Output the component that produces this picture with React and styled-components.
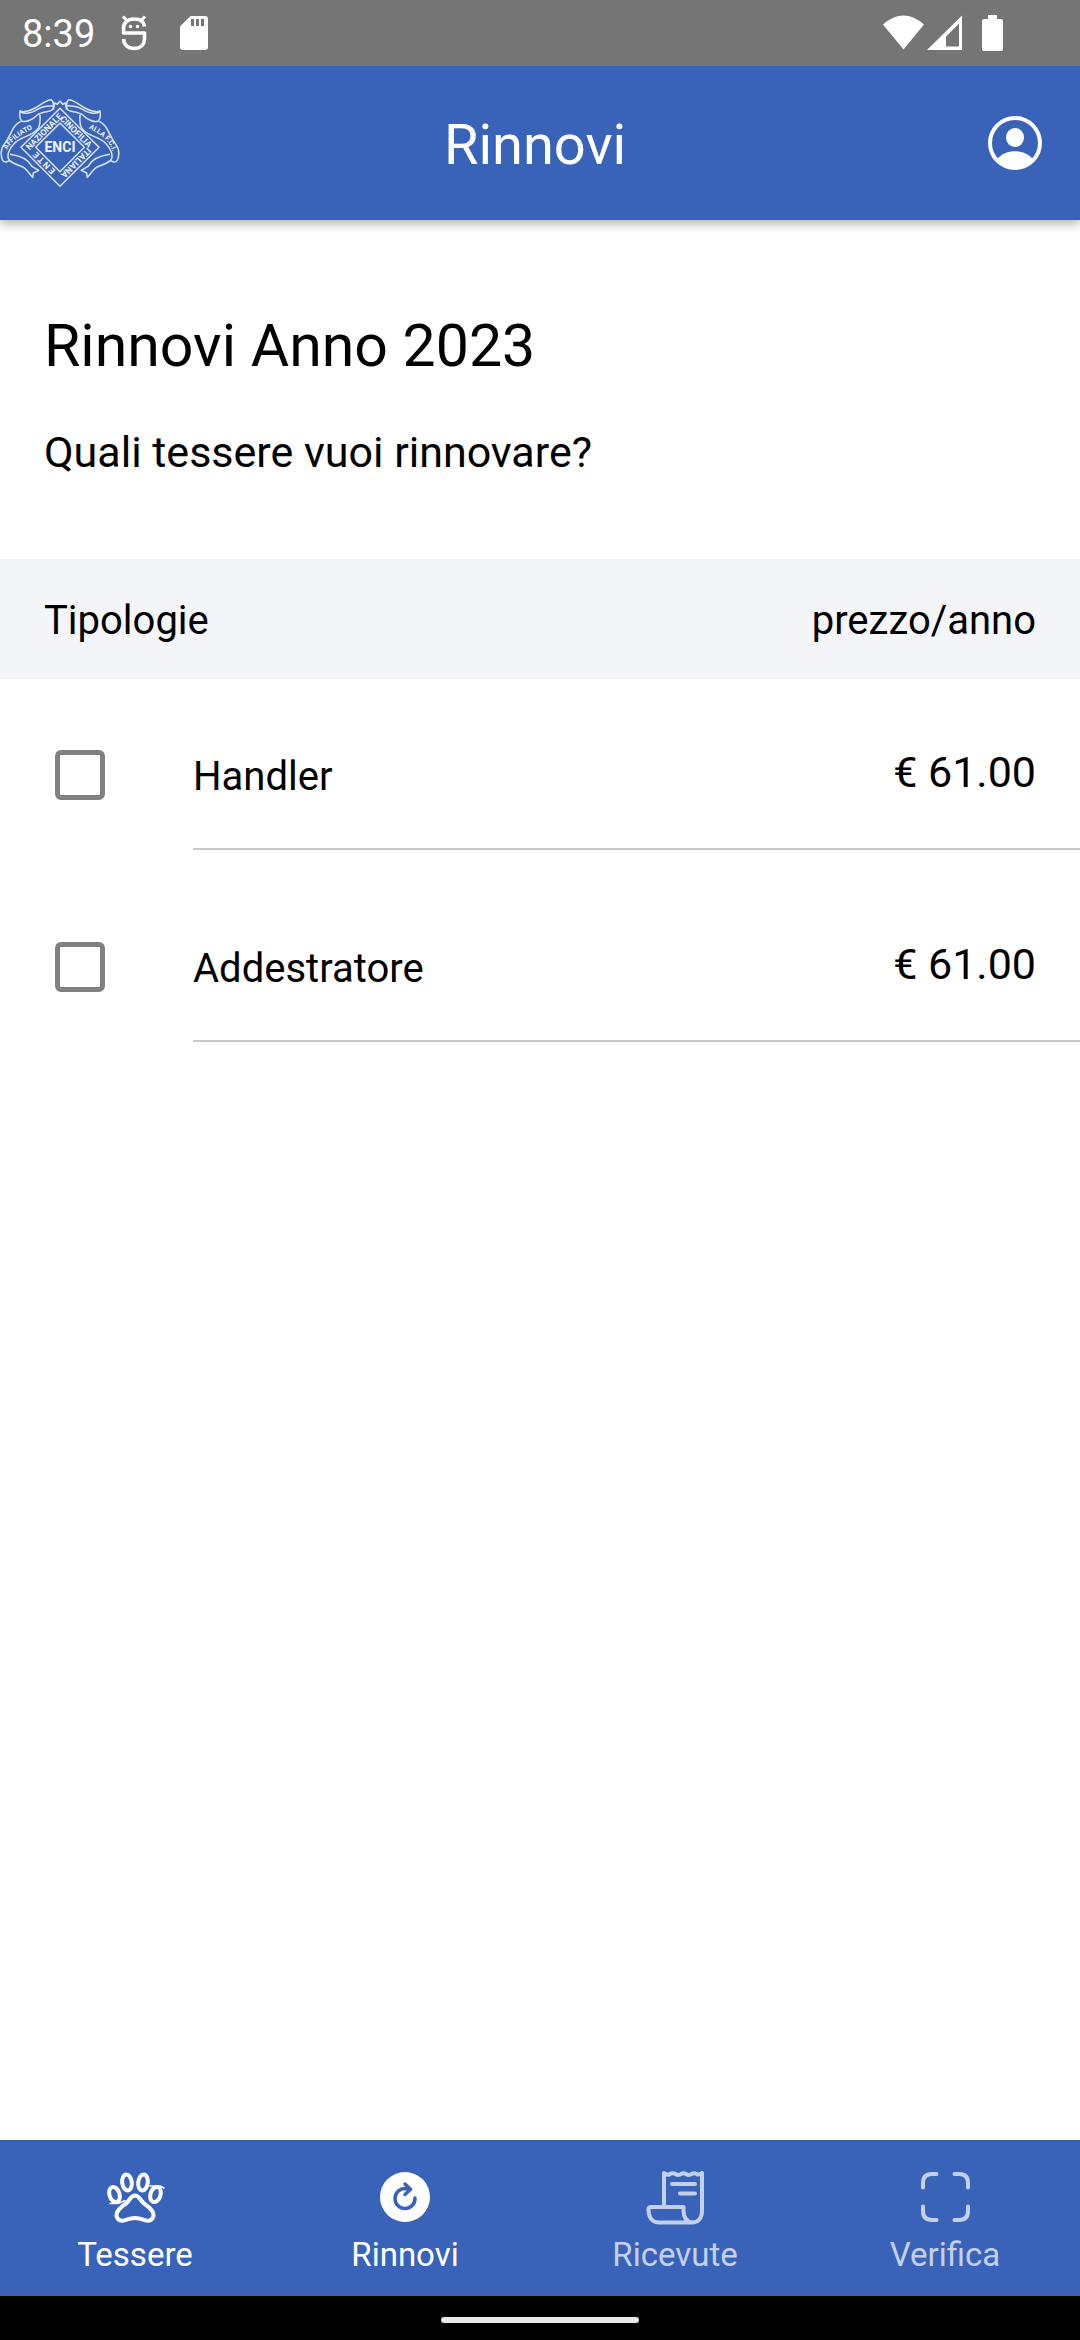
import React, { useState } from "react";
import styled, { createGlobalStyle } from "styled-components";

const GlobalStyle = createGlobalStyle`
  *, *::before, *::after { box-sizing: border-box; }
  body {
    margin: 0;
    background: #fff;
    color: #000;
    font-family: Roboto, "Liberation Sans", sans-serif;
  }
`;

const Screen = styled.div`
  display: flex;
  flex-direction: column;
  min-height: 100vh;
`;

const StatusBar = styled.div`
  position: relative;
  z-index: 1;
  display: flex;
  align-items: center;
  justify-content: space-between;
  height: 66px;
  padding: 0 77px 0 22px;
  background: #757575;
  color: #fff;
`;

const StatusGroup = styled.div`
  display: flex;
  align-items: center;
  gap: ${(p) => p.$gap}px;
`;

const Clock = styled.span`
  font-size: 38px;
  line-height: 48px;
  padding-top: 2px;
`;

const TopBar = styled.header`
  position: relative;
  display: flex;
  align-items: center;
  height: 154px;
  background: #3963b9;
  color: #fff;
  box-shadow: 0 4px 10px rgba(0, 0, 0, 0.3);
`;

const LogoSvg = styled.svg`
  flex: none;
  width: 120px;
  height: 92px;
`;

const BarTitle = styled.div`
  flex: 1;
  padding-top: 4px;
  font-size: 56px;
  line-height: 72px;
  text-align: center;
`;

const ProfileButton = styled.button`
  display: flex;
  align-items: center;
  justify-content: center;
  width: 130px;
  height: 100%;
  padding: 0;
  border: 0;
  background: none;
  color: inherit;
`;

const Main = styled.main`
  flex: 1;
`;

const Intro = styled.section`
  padding: 90px 44px 79px;
`;

const Heading = styled.h1`
  margin: 0 0 42px;
  font-size: 59px;
  font-weight: 400;
  line-height: 72px;
`;

const Question = styled.p`
  margin: 0;
  font-size: 43px;
  line-height: 56px;
`;

const PriceTable = styled.table`
  width: 100%;
  border-collapse: separate;
  border-spacing: 0;
`;

const HeadCell = styled.th`
  height: 120px;
  padding: 4px 44px 0;
  background: #f4f5f9;
  font-size: 40px;
  font-weight: 400;
  line-height: 48px;
  text-align: ${(p) => p.$align};
`;

const Row = styled.tr`
  & > td {
    height: 192px;
    padding: 0 0 48px;
    vertical-align: bottom;
  }
  &:first-child > td {
    height: 171px;
  }
`;

const CheckCell = styled.td`
  width: 193px;
`;

const NameCell = styled.td`
  border-bottom: 2px solid #c8c7cc;
  font-size: 40px;
  line-height: 46px;
`;

const NameLabel = styled.label`
  display: block;
`;

const PriceCell = styled.td`
  border-bottom: 2px solid #c8c7cc;
  font-size: 43px;
  line-height: 56px;
  text-align: right;
`;

const Price = styled.div`
  padding-right: 44px;
`;

const Checkbox = styled.input`
  appearance: none;
  display: block;
  width: 50px;
  height: 50px;
  margin: 0 0 2px 55px;
  border: 5px solid #808080;
  border-radius: 6px;
  &:checked {
    border-color: #3963b9;
    background: #3963b9;
  }
`;

const TabBar = styled.nav`
  display: grid;
  grid-template-columns: repeat(4, 1fr);
  height: 156px;
  border-top: 2px solid #305fae;
  background: #3963b9;
`;

const Tab = styled.a`
  display: flex;
  flex-direction: column;
  align-items: center;
  gap: 10px;
  padding-top: 29px;
  color: ${(p) => (p.$bright ? "#fff" : "#c4d0ea")};
  font-size: 33px;
  line-height: 40px;
  text-decoration: none;
`;

const TabIcon = styled.svg`
  width: 60px;
  height: 54px;
  fill: none;
  stroke: currentColor;
  stroke-width: 4;
  stroke-linecap: round;
  stroke-linejoin: round;
`;

const SystemBar = styled.div`
  display: flex;
  justify-content: center;
  height: 44px;
  padding-top: 21px;
  background: #000;
`;

const HomeHandle = styled.div`
  width: 198px;
  height: 6px;
  border-radius: 3px;
  background: #e8e7ea;
`;

function DebugIcon() {
  return (
    <svg width="26" height="36" viewBox="0 0 26 36" fill="none" stroke="#fff" strokeWidth="3.6">
      <path d="M23.500 11.500C23 6.500 19 4 13 4C6.500 4 2.500 8 2.500 13V18H23.500V23.500C23.500 30 19 33.500 13 33.500C7 33.500 3 30 2.500 24" strokeLinejoin="round" />
      <path d="M2 1.500L6 5.500M24 1.500L20 5.500" strokeWidth="3" />
      <circle cx="9.500" cy="11.500" r="1.700" fill="#fff" stroke="none" />
      <circle cx="16.500" cy="11.500" r="1.700" fill="#fff" stroke="none" />
    </svg>
  );
}

function SdIcon() {
  return (
    <svg width="28" height="36" viewBox="0 0 28 36">
      <path d="M10.500 1H25Q28 1 28 4V32Q28 35 25 35H3Q0 35 0 32V11.500Z" fill="#fff" />
      <path d="M11 4h3v7h-3zM16 4h3v7h-3zM21 4h3v7h-3z" fill="#757575" />
    </svg>
  );
}

function WifiIcon() {
  return (
    <svg width="41" height="36" viewBox="0 0 41 36">
      <path d="M0 9.500Q20.500 -8.500 41 9.500L20.500 34.500Z" fill="#fff" />
    </svg>
  );
}

function SignalIcon() {
  return (
    <svg width="35" height="36" viewBox="0 0 35 36">
      <path fillRule="evenodd" d="M35 0.500V35H0ZM32 8.500L19 21.500V31.500H32Z" fill="#fff" />
    </svg>
  );
}

function BatteryIcon() {
  return (
    <svg width="21" height="36" viewBox="0 0 21 36">
      <path d="M6 0h9v4h4q2 0 2 2v28q0 2-2 2H2q-2 0-2-2V6q0-2 2-2h4z" fill="#fff" />
    </svg>
  );
}

function Ribbon() {
  return (
    <g>
      <path d="M60 92C72 97 88 92 105 83C125 72 138 58 154 58C163 66 162 82 156 89C148 96 128 92 112 104C98 118 76 128 65 122C59 114 58 102 60 92Z" />
      <path d="M60 92C70 106 100 96 118 84C132 76 142 76 160 76" />
      <path d="M62 123C36 136 36 160 14 190C2 206 2 226 8 240C14 248 22 246 28 240C40 250 56 254 72 262C82 270 88 280 98 291L100 278L116 270L96 258C84 236 60 226 30 222" />
      <path d="M28 240C18 226 28 204 42 190C60 168 102 168 116 142C120 132 121 118 120 104" />
      <path d="M160 88L164 68L172 72L180 62" />
    </g>
  );
}

function Logo() {
  return (
    <LogoSvg viewBox="0 50 360 276" role="img" aria-label="ENCI" fill="none" stroke="#dbe4f6" strokeWidth="4.500" strokeLinejoin="round">
      <Ribbon />
      <g transform="translate(360 0) scale(-1 1)">
        <Ribbon />
      </g>
      <path d="M180 84L297 201L180 318L63 201Z" fill="#3963b9" />
      <path d="M180 128L253 201L180 274L107 201Z" />
      <path id="ribbonLeft" d="M18 228C18 188 62 162 116 136" stroke="none" />
      <path id="ribbonRight" d="M250 136C300 158 340 186 340 232" stroke="none" />
      <g fill="#f0f4fc" stroke="none" fontFamily="Roboto, sans-serif" fontWeight="700" textAnchor="middle">
        <text fontSize="26" transform="translate(132 154) rotate(-45)" dy="9">NAZIONALE</text>
        <text fontSize="26" transform="translate(228 154) rotate(45)" dy="9">CINOFILIA</text>
        <text fontSize="26" transform="translate(228 248) rotate(135)" dy="9">ITALIANA</text>
        <text fontSize="26" transform="translate(132 248) rotate(225)" dy="9">E N T E</text>
        <text fontSize="21">
          <textPath href="#ribbonLeft" startOffset="50%">AFFILIATO</textPath>
        </text>
        <text fontSize="21">
          <textPath href="#ribbonRight" startOffset="50%">ALLA F.C.I.</textPath>
        </text>
        <text x="180" y="216" fontSize="42">ENCI</text>
      </g>
    </LogoSvg>
  );
}

function ProfileIcon() {
  return (
    <svg width="54" height="54" viewBox="0 0 54 54">
      <circle cx="27" cy="27" r="25" fill="none" stroke="#fff" strokeWidth="4" />
      <ellipse cx="27" cy="21.500" rx="9" ry="9.500" fill="#fff" />
      <path d="M9.500 43C17 32.500 37 32.500 44.500 43C36 54.500 18 54.500 9.500 43Z" fill="#fff" />
    </svg>
  );
}

const tabs = [
  {
    name: "Tessere",
    bright: true,
    icon: (
      <>
        <ellipse cx="22" cy="11.500" rx="4.800" ry="8" transform="rotate(-7 22 11.500)" />
        <ellipse cx="38" cy="11.500" rx="4.800" ry="8" transform="rotate(7 38 11.500)" />
        <ellipse cx="9.500" cy="23.500" rx="5" ry="7.800" transform="rotate(-18 9.500 23.500)" />
        <ellipse cx="50.500" cy="23.500" rx="5" ry="7.800" transform="rotate(18 50.500 23.500)" />
        <path d="M30 24.500C34 24.500 35 28.500 38 31.500C42 35.500 48.500 38 48.500 44C48.500 48.500 44.500 50.500 40.500 49.300C36.500 48 34 47 30 47C26 47 23.500 48 19.500 49.300C15.500 50.500 11.500 48.500 11.500 44C11.500 38 18 35.500 22 31.500C25 28.500 26 24.500 30 24.500Z" />
        <path d="M45 15H55L59 17M5 32.500H13L20 29.500" strokeWidth="1.500" />
      </>
    ),
  },
  {
    name: "Rinnovi",
    bright: true,
    current: true,
    icon: (
      <>
        <circle cx="30" cy="26" r="25" fill="currentColor" stroke="none" />
        <path d="M40 27A10 10 0 1 1 30 17.500L35 18.200" stroke="#3963b9" strokeWidth="3.500" />
        <path d="M30 13L35.500 18.200L30 23.500" stroke="#3963b9" strokeWidth="3.500" />
      </>
    ),
  },
  {
    name: "Ricevute",
    icon: (
      <>
        <path d="M19 35V2Q22 5 25 3Q28 1.500 30.500 3Q33.500 5 36 3Q38.500 1.500 41 3Q44 5 46.500 3Q49 1.500 51.500 3Q54 4.500 57 2V40C57 47 53 51.500 47 51.500H14C7 51.500 3.500 46 3.500 38.500Q3.500 36 6 36H38.500V40C38.500 46 42 51.500 47 51.500" />
        <path d="M27 13H50M35 22.500H50" />
      </>
    ),
  },
  {
    name: "Verifica",
    icon: (
      <path d="M21.500 3H17Q8 3 8 12V16.500M39.500 3H44Q53 3 53 12V16.500M21.500 49H17Q8 49 8 40V35.500M39.500 49H44Q53 49 53 40V35.500" />
    ),
  },
];

const cards = [
  { id: "handler", name: "Handler", price: "€ 61.00" },
  { id: "addestratore", name: "Addestratore", price: "€ 61.00" },
];

export default function App() {
  const [selected, setSelected] = useState({});
  const toggle = (id) => setSelected((s) => ({ ...s, [id]: !s[id] }));

  return (
    <Screen>
      <GlobalStyle />
      <StatusBar>
        <StatusGroup $gap={26}>
          <Clock>8:39</Clock>
          <StatusGroup $gap={33}>
            <DebugIcon />
            <SdIcon />
          </StatusGroup>
        </StatusGroup>
        <StatusGroup $gap={20}>
          <StatusGroup $gap={3}>
            <WifiIcon />
            <SignalIcon />
          </StatusGroup>
          <BatteryIcon />
        </StatusGroup>
      </StatusBar>
      <TopBar>
        <Logo />
        <BarTitle>Rinnovi</BarTitle>
        <ProfileButton type="button" aria-label="Profilo">
          <ProfileIcon />
        </ProfileButton>
      </TopBar>
      <Main>
        <Intro>
          <Heading>Rinnovi Anno 2023</Heading>
          <Question>Quali tessere vuoi rinnovare?</Question>
        </Intro>
        <PriceTable>
          <thead>
            <tr>
              <HeadCell colSpan={2} scope="col" $align="left">Tipologie</HeadCell>
              <HeadCell scope="col" $align="right">prezzo/anno</HeadCell>
            </tr>
          </thead>
          <tbody>
            {cards.map((card) => (
              <Row key={card.id}>
                <CheckCell>
                  <Checkbox
                    type="checkbox"
                    id={card.id}
                    checked={!!selected[card.id]}
                    onChange={() => toggle(card.id)}
                  />
                </CheckCell>
                <NameCell>
                  <NameLabel htmlFor={card.id}>{card.name}</NameLabel>
                </NameCell>
                <PriceCell>
                  <Price>{card.price}</Price>
                </PriceCell>
              </Row>
            ))}
          </tbody>
        </PriceTable>
      </Main>
      <TabBar>
        {tabs.map((tab) => (
          <Tab
            key={tab.name}
            href={`#${tab.name.toLowerCase()}`}
            $bright={tab.bright}
            aria-current={tab.current ? "page" : undefined}
          >
            <TabIcon viewBox="0 0 60 54" aria-hidden="true">{tab.icon}</TabIcon>
            {tab.name}
          </Tab>
        ))}
      </TabBar>
      <SystemBar>
        <HomeHandle />
      </SystemBar>
    </Screen>
  );
}
